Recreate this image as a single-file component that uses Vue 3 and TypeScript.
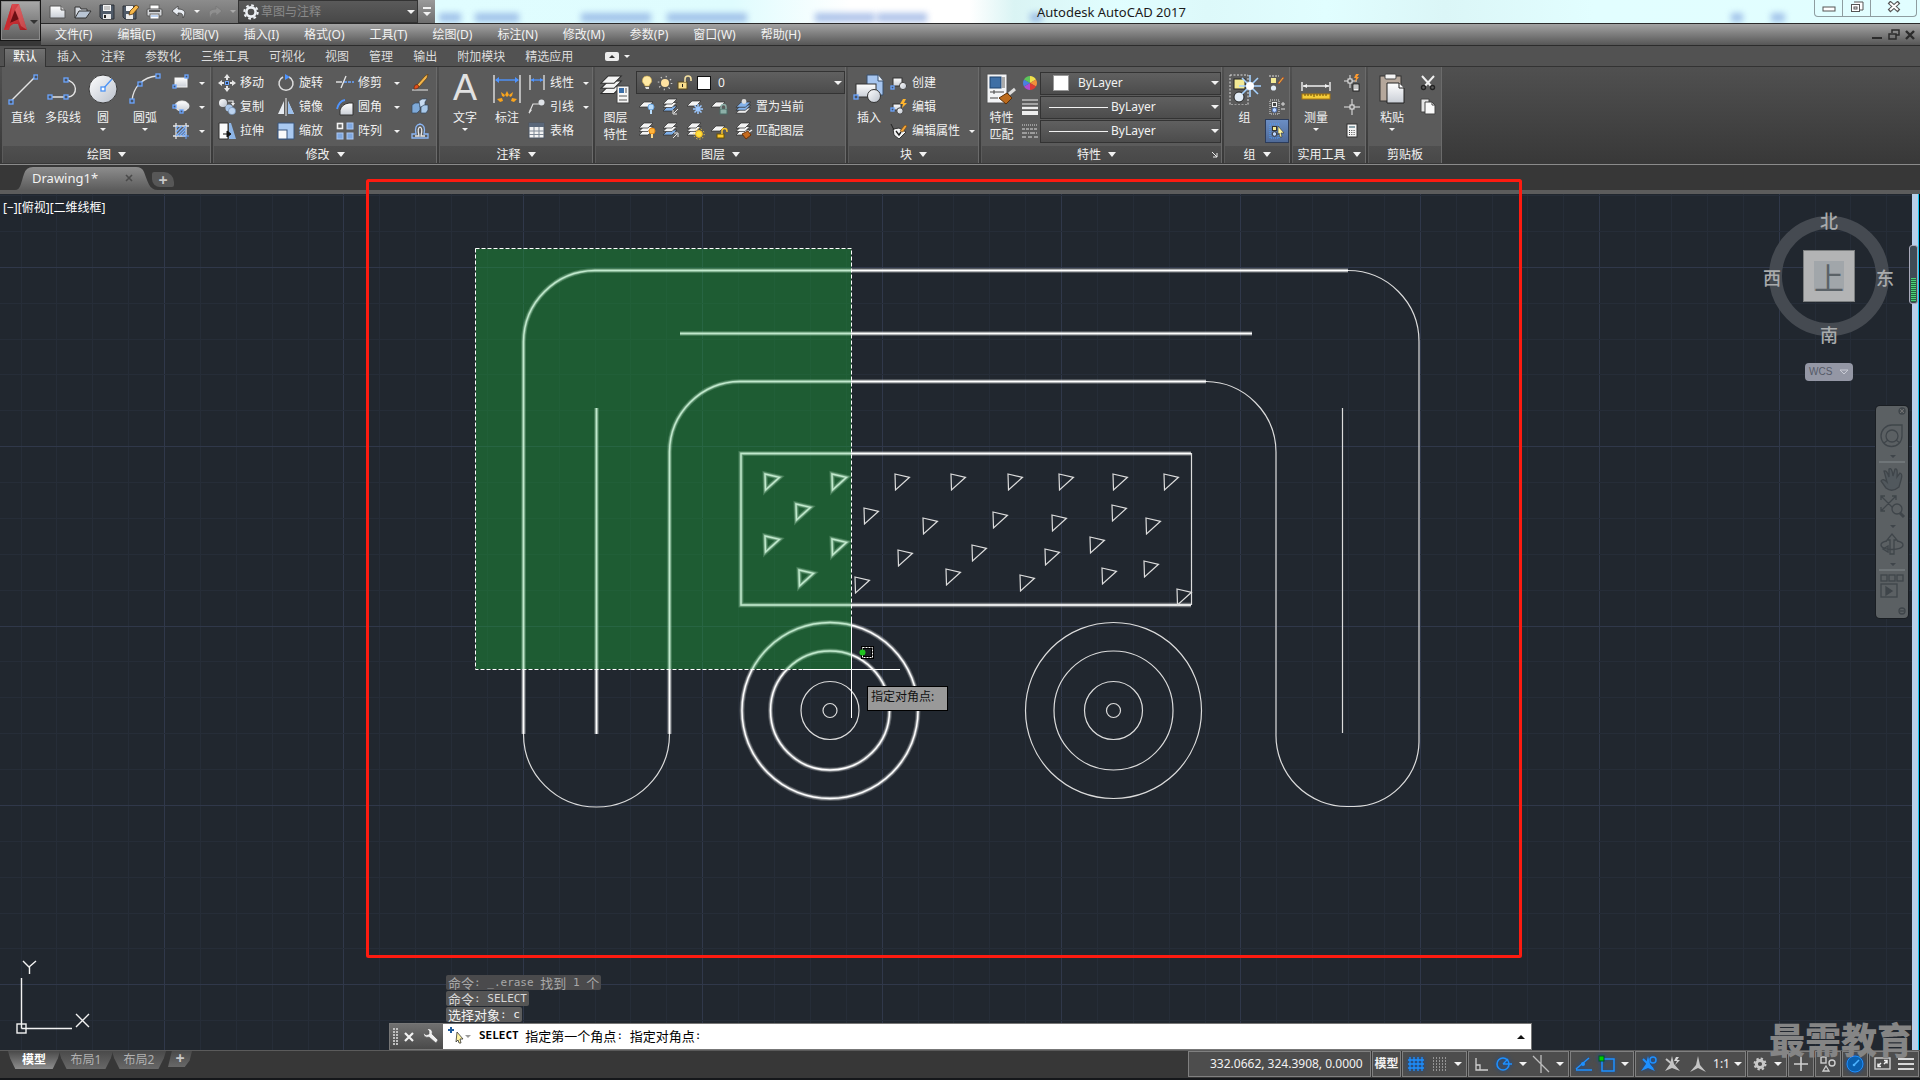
<script setup lang="ts">
import { ref } from 'vue'

interface Icon { w: number; h: number; body: string }
interface Tool { icon: string; label?: string; arrow?: boolean; active?: boolean; name: string }

const sq = (x: number, y: number, s = 4) =>
  `<rect x="${x}" y="${y}" width="${s}" height="${s}" fill="#4a5462" stroke="#6aa5ff" stroke-width="1.3"/>`
const sheet = (x: number, y: number, fill = '#f4f4f4', s = 1) =>
  `<path transform="translate(${x} ${y}) scale(${s})" d="M5 0h9l-5 5H0z" fill="${fill}" stroke="#2c2c2c" stroke-width=".7"/>`
const stack = (x: number, y: number, last = '#f4f4f4', s = 1) =>
  sheet(x, y + 7 * s, last, s) + sheet(x, y + 3.5 * s, '#f4f4f4', s) + sheet(x, y, '#f4f4f4', s)

const icons: Record<string, Icon> = {
  // quick access
  new: { w: 18, h: 16, body: '<path d="M1 2h11l4 4v8H1z" fill="url(#paper)" stroke="#555"/><path d="M12 2v4h4" fill="#ccc" stroke="#555"/>' },
  open: { w: 18, h: 16, body: '<path d="M1 14V3h5l1 2h6v3" fill="#d6dbe2" stroke="#333"/><path d="M1 14L5 7h12l-5 7z" fill="#b9c5d4" stroke="#333"/>' },
  save: { w: 16, h: 16, body: '<path d="M1 1h14v14H3l-2-2z" fill="#505b69" stroke="#2c3037"/><rect x="4" y="1" width="8" height="6" fill="#f6f6f6"/><path d="M5 3h6M5 5h6" stroke="#999"/><rect x="4" y="10" width="8" height="5" fill="#e8e8e8"/><rect x="5" y="11" width="2" height="3" fill="#222"/>' },
  saveas: { w: 17, h: 16, body: '<path d="M1 2h13v13H3l-2-2z" fill="#505b69" stroke="#2c3037"/><rect x="4" y="2" width="7" height="5" fill="#f6f6f6"/><rect x="4" y="10" width="7" height="5" fill="#e8e8e8"/><path d="M7 11l1-4 6-6 3 2-6 7z" fill="#f7b748" stroke="#5a3a10" stroke-width=".8"/>' },
  print: { w: 18, h: 16, body: '<rect x="4" y="1" width="9" height="6" fill="#fff" stroke="#666"/><rect x="1" y="5" width="15" height="7" rx="1" fill="#d5d7da" stroke="#555"/><path d="M3 7h11" stroke="#555" stroke-width="2"/><rect x="4" y="10" width="9" height="5" fill="#fff" stroke="#666"/><path d="M5 12h7" stroke="#7ca5df"/>' },
  undo: { w: 16, h: 14, body: '<path d="M7 1L1 6l6 5V8c4 0 5 1 5 5 4-6 1-9-5-9z" fill="#e8ecf2" stroke="#444" stroke-width=".8"/>' },
  redo: { w: 16, h: 14, body: '<path d="M9 1l6 5-6 5V8c-4 0-5 1-5 5C0 7 3 4 9 4z" fill="#8f8f8f" stroke="#777" stroke-width=".8"/>' },
  gear: { w: 16, h: 16, body: '<circle cx="8" cy="8" r="4.6" fill="none" stroke="#eef1f5" stroke-width="2.6"/><circle cx="8" cy="8" r="6.7" fill="none" stroke="#eef1f5" stroke-width="2" stroke-dasharray="2.7 2.56"/>' },
  // draw
  line: { w: 30, h: 32, body: `<path d="M3 28L27 4" stroke="#e4e4e4" stroke-width="1.4"/>${sq(1, 27)}${sq(26, 2)}` },
  pline: { w: 32, h: 32, body: `<path d="M2 24h18c12 0 11-17-2-17" fill="none" stroke="#e4e4e4" stroke-width="1.4"/>${sq(1, 22)}${sq(17, 22)}${sq(17, 5)}` },
  circle: { w: 32, h: 32, body: `<circle cx="16" cy="16" r="14" fill="url(#disc)" stroke="#3c3c3c"/><path d="M16 16l9-10" stroke="#4b92f5" stroke-width="1.3"/><rect x="14" y="14" width="4" height="4" fill="#fff" stroke="#4b92f5" stroke-width="1.3"/>` },
  arc: { w: 32, h: 32, body: `<path d="M3 28C4 14 14 4 28 3" fill="none" stroke="#e4e4e4" stroke-width="1.4"/>${sq(1, 26)}${sq(9, 9)}${sq(27, 1)}` },
  rect: { w: 18, h: 16, body: `<rect x="3" y="4" width="12" height="9" fill="url(#paper)" stroke="#f6f6f6"/>${sq(13, 1, 3)}${sq(1, 11, 3)}` },
  ellipse: { w: 18, h: 16, body: `<ellipse cx="10" cy="8" rx="7" ry="5" fill="url(#paper)" stroke="#f0f0f0"/>${sq(1, 7, 3)}${sq(8, 12, 3)}` },
  hatch: { w: 18, h: 18, body: '<path d="M1 4h16M1 14h13M4 1v16M14 1v13" stroke="#e8e8e8" stroke-width="1.3"/><path d="M4 14L14 4M4 10l6-6M4 6l2-2M7 14l7-7M10 14l4-4" stroke="#7ab0ff" stroke-width="1.5"/><path d="M14 12v5M11 14h6" stroke="#6aa5ff"/>' },
  // modify
  move: { w: 18, h: 18, body: '<path d="M9 0l3 4H6zM9 18l3-4H6zM0 9l4-3v6zM18 9l-4-3v6z" fill="#e6e6e6"/><path d="M9 3v3M9 12v3M3 9h3M12 9h3" stroke="#e6e6e6" stroke-width="2"/><rect x="7.5" y="7.5" width="3" height="3" fill="#2c3e58" stroke="#6aa5ff"/>' },
  rotate: { w: 18, h: 18, body: '<path d="M6 3a7 7 0 1 0 6 0" fill="none" stroke="#dedede" stroke-width="1.5"/><path d="M8 0l5 3-5 3z" fill="#4e94ff"/>' },
  trim: { w: 18, h: 16, body: '<path d="M0 8h6" stroke="#e8e8e8" stroke-width="1.4"/><path d="M8 8h10" stroke="#6aa5ff" stroke-width="1.4" stroke-dasharray="3 1"/><path d="M5 14l5-12" stroke="#e8e8e8" stroke-width="1.3"/>' },
  brush: { w: 18, h: 18, body: '<path d="M1 16h16" stroke="#e8e8e8"/><path d="M6 11l8-9 3-2-1 4-8 9z" fill="#f3b54a" stroke="#5c3b10" stroke-width=".7"/><path d="M3 15c0-4 2-5 4-4 2 2 0 4-4 4z" fill="#e0501a" stroke="#5c1a05" stroke-width=".6"/>' },
  copy: { w: 18, h: 18, body: '<circle cx="5" cy="5" r="4" fill="url(#disc)"/><circle cx="11" cy="10" r="3.6" fill="#a9c5e8"/><circle cx="14" cy="13" r="3.6" fill="#bcd3ef" stroke="#6d8bb0" stroke-width=".6"/><path d="M10 3h5v3" fill="none" stroke="#f0f0f0" stroke-width="1.2"/><path d="M13 5h4l-2 3z" fill="#f0f0f0"/>' },
  mirror: { w: 18, h: 18, body: '<path d="M7 3v13H1zM11 3v13h6z" fill="#e7ebf0"/><path d="M11 3v13h6z" fill="#9cc0ec"/><path d="M9 0v18" stroke="#eee"/>' },
  fillet: { w: 18, h: 18, body: '<path d="M4 17V12q2-6 9-7h4v12z" fill="url(#paper)" stroke="#333"/><path d="M1 11Q3 3 9 2" fill="none" stroke="#4e94ff" stroke-width="1.8"/>' },
  explode: { w: 18, h: 16, body: '<path d="M1 7l3-2h5v7l-3 3H1z" fill="#7ea9d8" stroke="#34485f" stroke-width=".7"/><path d="M8 3l3-2h5l-2 3v5H9z" fill="#c8dcf2" stroke="#34485f" stroke-width=".7"/><path d="M10 9l3-2h4v5l-2 3h-5z" fill="#a9c9ea" stroke="#34485f" stroke-width=".7"/>' },
  stretch: { w: 18, h: 18, body: '<path d="M1 1h9v16H1z" fill="#fafafa" stroke="#333"/><path d="M11 1l2 0 5 16h-7z" fill="#8db5e6"/><path d="M5 12h6M9 9l4 3-4 3z" stroke="#111" fill="#111"/>' },
  scale: { w: 18, h: 18, body: '<path d="M1 1h16v16H1z" fill="#aac9f0" stroke="#39547a"/><rect x="1" y="8" width="9" height="9" fill="#fafafa" stroke="#39547a"/>' },
  array: { w: 18, h: 18, body: '<rect x="1.500" y="1.500" width="5" height="5" fill="#666" stroke="#f4f4f4" stroke-width="1.6"/><g fill="#7fa7df" stroke="#aac8f5"><rect x="11" y="1" width="6" height="6"/><rect x="1" y="11" width="6" height="6"/><rect x="11" y="11" width="6" height="6"/></g>' },
  offset: { w: 18, h: 18, body: '<path d="M1 16v-4h4q-2-9 4-10 6 1 4 10h4v4z" fill="none" stroke="#8ab6f5" stroke-width="1.3"/><path d="M4 14h4q-2-8 1-9 3 1 1 9h4" fill="none" stroke="#e8e8e8" stroke-width="1.3"/>' },
  // annotation
  dim: { w: 30, h: 32, body: '<path d="M2 2v28M28 2v28" stroke="#e0e0e0" stroke-width="1.4"/><path d="M4 7h22" stroke="#4e94ff" stroke-width="1.4"/><path d="M3 7l4-3v6zM27 7l-4-3v6z" fill="#4e94ff"/><g fill="#f9a41d"><path d="M15 18l2 4-2 2-2-2z"/><path d="M9 19l4 3-1 2-2-1z"/><path d="M21 19l-4 3 1 2 2-1z"/><path d="M5 26l5-1 1 3-3 1z"/><path d="M25 26l-5-1-1 3 3 1z"/></g>' },
  linear: { w: 18, h: 16, body: '<path d="M2 1v15M16 1v15" stroke="#e0e0e0" stroke-width="1.3"/><path d="M3 6h12" stroke="#4e94ff" stroke-width="1.3"/><path d="M3 6l3-2v4zM15 6l-3-2v4z" fill="#4e94ff"/>' },
  leader: { w: 18, h: 16, body: '<path d="M1 15L5 6h6" fill="none" stroke="#e0e0e0" stroke-width="1.2"/><path d="M1 16l1-5 2 1z" fill="#e0e0e0"/><circle cx="13.500" cy="4.500" r="3" fill="#dfe3e8"/>' },
  table: { w: 18, h: 18, body: '<rect x="1" y="1" width="15" height="15" fill="#f2f2f2" stroke="#4c5665"/><rect x="1" y="1" width="15" height="4" fill="#5a6779"/><path d="M1 9h15M1 12.500h15M6 5v11M11 5v11" stroke="#7d8794"/>' },
  // layers
  layers: { w: 32, h: 32, body: stack(1, 3, '#f4f4f4', 1.45) + '<rect x="17" y="13" width="12" height="17" fill="#f7f7f7" stroke="#444"/><rect x="19" y="15" width="5" height="5" fill="#3a6ea8"/><path d="M26 15v5M19 23h8M19 27h8" stroke="#555"/>' },
  lay1: { w: 18, h: 18, body: sheet(0, 4) + '<circle cx="12" cy="9" r="3" fill="#b9dcfb" stroke="#6aa5e0"/><path d="M12 12v4" stroke="#b9dcfb" stroke-width="2"/>' },
  lay2: { w: 18, h: 18, body: stack(0, 1, '#7fb0ea') + '<path d="M15 11l-4 4M10 12v4h4" stroke="#e8e8e8" fill="none"/>' },
  lay3: { w: 18, h: 18, body: sheet(0, 3) + '<path d="M11 6v10M6 11h10M7.500 7.500l7 7M14.500 7.500l-7 7" stroke="#9cc8ff" stroke-width="1.5"/>' },
  lay4: { w: 18, h: 18, body: sheet(0, 4) + '<rect x="9" y="11" width="7" height="5" fill="#8db0a8" stroke="#4b6d66"/><path d="M10 11V9a2.500 2.500 0 0 1 5 0v2" fill="none" stroke="#8db0a8" stroke-width="1.4"/>' },
  lay5: { w: 18, h: 18, body: sheet(1, 10, '#eee', 1.05) + sheet(1, 7, '#84b2ea', 1.05) + sheet(1, 4, '#84b2ea', 1.05) + '<circle cx="9" cy="3.500" r="2.400" fill="#ddd"/>' },
  lay6: { w: 18, h: 18, body: stack(0, 1) + '<circle cx="13" cy="9" r="3" fill="#ffb43c" stroke="#e88a10"/><path d="M13 12v4" stroke="#ffd98a" stroke-width="2"/>' },
  lay7: { w: 18, h: 18, body: stack(0, 1, '#7fb0ea') + '<path d="M10 16l4-4M11 11h4v4" stroke="#e8e8e8" fill="none"/>' },
  lay8: { w: 18, h: 18, body: stack(0, 1) + '<circle cx="12" cy="12" r="3.400" fill="#ffe23c" stroke="#f0b020"/><circle cx="12" cy="12" r="5.200" fill="none" stroke="#ffd63c" stroke-dasharray="1.200 2"/>' },
  lay9: { w: 18, h: 18, body: sheet(0, 4) + '<rect x="6" y="12" width="7" height="4" fill="#ffc92c" stroke="#6b5200"/><path d="M11 12V9a2.500 2.500 0 0 1 5 0v1" fill="none" stroke="#ffc92c" stroke-width="1.400"/>' },
  lay10: { w: 18, h: 18, body: stack(1, 1) + '<path d="M7 12l6-3 3 4-5 4z" fill="#c46a1e" stroke="#6b3207"/><path d="M14 10l3-2" stroke="#eee" stroke-width="1.500"/>' },
  bulb: { w: 12, h: 16, body: '<path d="M6 1a4.500 4.500 0 0 1 3 8l-1 2H4L3 9a4.500 4.500 0 0 1 3-8z" fill="#ffe9a3" stroke="#c9a64a" stroke-width=".6"/><path d="M4 12h4v2H5z" fill="#ddd"/>' },
  sun: { w: 16, h: 16, body: '<circle cx="8" cy="8" r="4" fill="#ffe2a1"/><circle cx="8" cy="8" r="6.500" fill="none" stroke="#d8d8d8" stroke-width="1.600" stroke-dasharray="1 4.100"/>' },
  lock: { w: 16, h: 16, body: '<rect x="1" y="7" width="9" height="7" fill="#f8dd8c" stroke="#5a4a1c"/><path d="M8 7V4a3 3 0 0 1 6 0v2" fill="none" stroke="#f3dfa0" stroke-width="1.600"/><path d="M5.500 9v3" stroke="#222"/>' },
  // block
  insert: { w: 32, h: 32, body: `<path d="M14 2h11l5 6v14H14z" fill="#a6c5ef" stroke="#38506f"/><path d="M25 2v6h5" fill="#e9f0fa" stroke="#38506f"/><rect x="3" y="11" width="20" height="13" fill="url(#paper)" stroke="#333"/><circle cx="21" cy="23" r="6.500" fill="url(#disc)" stroke="#333"/>${sq(1, 22)}` },
  create: { w: 18, h: 16, body: `<rect x="3" y="3" width="9" height="8" fill="url(#paper)" stroke="#333"/><circle cx="13" cy="11" r="3.600" fill="url(#disc)" stroke="#444"/>${sq(1, 11, 3)}` },
  edit: { w: 18, h: 16, body: `<rect x="3" y="5" width="8" height="6" fill="url(#paper)" stroke="#333"/><circle cx="10" cy="12" r="3.200" fill="url(#disc)" stroke="#444"/>${sq(1, 9, 3)}<path d="M13 0l-3 5h3l-1 4 5-5h-3l2-4z" fill="#ffb52e"/>` },
  attr: { w: 18, h: 16, body: '<path d="M3 6l6-1 7 4-7 7-5-4z" fill="#f4f4f4" stroke="#333"/><path d="M1 1l3 6" stroke="#222"/><path d="M6 8l3 4 2-3" stroke="#222" fill="none" stroke-width="1.400"/><path d="M10 8l5-6 2 1-4 6z" fill="#f3a53a" stroke="#744508" stroke-width=".6"/>' },
  // properties
  match: { w: 32, h: 32, body: '<rect x="1" y="1" width="20" height="29" fill="#f3f4f6" stroke="#555"/><rect x="4" y="4" width="11" height="11" fill="#3f6fa5" stroke="#20456f"/><rect x="16" y="4" width="3" height="11" fill="#aaa"/><path d="M4 19h14M4 25h8M8 17v4" stroke="#444"/><path d="M13 25l8-5 5 5-6 6z" fill="#bb6a1c" stroke="#5f3007"/><path d="M23 21l6-5" stroke="#ddd" stroke-width="3"/>' },
  wheel: { w: 16, h: 16, body: '<g transform="translate(8 8)"><path d="M0 0V-7A7 7 0 0 1 6-3.500z" fill="#f0e04a"/><path d="M0 0L6-3.500A7 7 0 0 1 6 3.500z" fill="#f2903a"/><path d="M0 0L6 3.500A7 7 0 0 1 0 7z" fill="#dc3b35"/><path d="M0 0V7A7 7 0 0 1-6 3.500z" fill="#b04bd0"/><path d="M0 0L-6 3.500A7 7 0 0 1-6-3.500z" fill="#4a7fe0"/><path d="M0 0L-6-3.500A7 7 0 0 1 0-7z" fill="#5cc45a"/></g>' },
  weight: { w: 16, h: 16, body: '<path d="M0 1h16M0 5h16" stroke="#eee"/><path d="M0 9h16" stroke="#eee" stroke-width="2.400"/><path d="M0 14h16" stroke="#eee" stroke-width="4"/>' },
  ltype: { w: 16, h: 16, body: '<path d="M0 2h16" stroke="#ddd" stroke-dasharray="1 1"/><path d="M0 6h16" stroke="#ddd" stroke-dasharray="3 1"/><path d="M0 10h16" stroke="#ddd" stroke-dasharray="5 1 1 1"/><path d="M0 14h16" stroke="#ddd" stroke-dasharray="4 2"/>' },
  // groups
  group: { w: 34, h: 34, body: '<path d="M2 2h18v30H2z" fill="none" stroke="#ddd" stroke-dasharray="2 1.500"/><rect x="6" y="6" width="11" height="10" fill="#f3ea95" stroke="#222"/><circle cx="11" cy="24" r="5" fill="#e2ecf6" stroke="#222"/><path d="M22 2v22M11 13h22M14 5l16 16M30 5L14 21" stroke="#a6d2ff" stroke-width="1.600"/><circle cx="22" cy="13" r="4" fill="#fff"/>' },
  gedit: { w: 18, h: 18, body: '<path d="M1 2h10" stroke="#ddd" stroke-dasharray="2 1"/><rect x="3" y="4" width="5" height="5" fill="#f3ea95"/><circle cx="5.500" cy="14" r="2.600" fill="#e2ecf6"/><path d="M10 9l5-6 1 1-5 6z" fill="#f3c04a" stroke="#b03a1a" stroke-width=".6"/>' },
  gadd: { w: 18, h: 18, body: '<path d="M2 2h9v14H2z" fill="none" stroke="#ddd" stroke-dasharray="1 1"/><rect x="4.500" y="4.500" width="4" height="4" fill="#444" stroke="#eee"/><circle cx="6.500" cy="12" r="2.300" fill="#bcd6ff" stroke="#4e6fb0"/><path d="M13 6h4M15 4v4M13 11h4" stroke="#ddd"/>' },
  gsel: { w: 18, h: 18, body: '<path d="M2 2h9v14H2z" fill="none" stroke="#4fa0ff" stroke-dasharray="1 1"/><rect x="4.500" y="4.500" width="4" height="4" fill="#f3ea95" stroke="#333"/><circle cx="6.500" cy="12" r="2.300" fill="#bcd6ff" stroke="#333"/><path d="M10 4l6 7-3 0 1 4-2 0-1-4-1 2z" fill="#fff59d" stroke="#333" stroke-width=".6"/>' },
  // utilities
  measure: { w: 32, h: 32, body: '<path d="M2 9v9M30 9v9M3 13h26" stroke="#f0f0f0" stroke-width="1.400"/><path d="M3 13l4-2v4zM29 13l-4-2v4z" fill="#f0f0f0"/><rect x="2" y="21" width="28" height="5" fill="#f4cb39" stroke="#a87612"/><path d="M5 21v2M8 21v2M11 21v2M14 21v3M17 21v2M20 21v2M23 21v2M26 21v2" stroke="#6b4b06"/>' },
  quick: { w: 18, h: 18, body: '<path d="M7 1v13M1 7h13" stroke="#e8e8e8"/><rect x="5" y="5" width="4" height="4" fill="#555" stroke="#eee"/><rect x="10" y="10" width="6" height="7" fill="#f4f4f4" stroke="#222"/><path d="M11.500 12h3M11.500 14h3" stroke="#333" stroke-dasharray="1 1"/><path d="M13 0l-2 4h2l-1 4 4-5h-2l2-3z" fill="#ff9a2e"/>' },
  point: { w: 18, h: 18, body: '<path d="M9 1v16M1 9h16" stroke="#e8e8e8"/><rect x="7" y="7" width="4" height="4" fill="#666" stroke="#eee"/>' },
  calc: { w: 18, h: 18, body: '<rect x="4" y="2" width="10" height="13" fill="#f4f4f4" stroke="#333"/><rect x="6" y="4" width="6" height="2" fill="#8aa0a8"/><path d="M6 8.500h6M6 10.500h6M6 12.500h6" stroke="#444" stroke-dasharray="1 1.300"/>' },
  paste: { w: 32, h: 32, body: '<rect x="4" y="3" width="21" height="25" fill="#b5a79b" stroke="#333"/><rect x="9" y="1" width="11" height="5" rx="1" fill="#f4f4f4" stroke="#444"/><path d="M11 10h12l5 5v15H11z" fill="url(#paper)" stroke="#222"/><path d="M23 10v5h5" fill="#fff" stroke="#222"/>' },
  cut: { w: 18, h: 18, body: '<path d="M3 2l9 10M15 2L6 12" stroke="#f0f0f0" stroke-width="2"/><circle cx="4.500" cy="13.500" r="2" fill="none" stroke="#222" stroke-width="1.400"/><circle cx="13.500" cy="13.500" r="2" fill="none" stroke="#222" stroke-width="1.400"/>' },
  copyclip: { w: 18, h: 18, body: '<path d="M2 1h8v13H2z" fill="#e4e4e4" stroke="#444"/><path d="M6 4h7l3 3v9H6z" fill="#fafafa" stroke="#444"/><path d="M13 4v3h3" fill="none" stroke="#444"/>' },
  // status bar
  sgrid: { w: 18, h: 18, body: '<path d="M3 2v14M7 2v14M11 2v14M15 2v14M1 5h16M1 9h16M1 13h16" stroke="#1e90ff" stroke-width="1.300"/>' },
  ssnap: { w: 16, h: 16, body: '<path d="M1 2h14M1 5h14M1 8h14M1 11h14M1 14h14" stroke="#ddd" stroke-dasharray="1 2"/>' },
  sortho: { w: 16, h: 16, body: '<path d="M3 2v12h12M3 9h4v5" fill="none" stroke="#cfcfcf" stroke-width="1.300"/>' },
  spolar: { w: 18, h: 18, body: '<circle cx="8" cy="9" r="6" fill="none" stroke="#1e90ff" stroke-width="1.600"/><path d="M8 9h9M8 9l5-5" stroke="#1e90ff" stroke-width="1.400"/>' },
  siso: { w: 18, h: 20, body: '<path d="M9 1v18M1 2l16 16" stroke="#bdbdbd" stroke-width="1.300"/>' },
  strack: { w: 18, h: 18, body: '<path d="M1 15h16M1 14L14 3" stroke="#1e90ff" stroke-width="1.500"/><circle cx="8" cy="9" r="2" fill="#1e90ff"/>' },
  sosnap: { w: 18, h: 18, body: '<rect x="4" y="4" width="12" height="12" fill="none" stroke="#1e90ff" stroke-width="1.500"/><rect x="1" y="1" width="5" height="5" fill="#00d000" stroke="#052"/>' },
  sann1: { w: 18, h: 18, body: '<path d="M8 1l2 8 5 7-7-3-7 3 5-7z" fill="#1e90ff"/><circle cx="13" cy="5" r="3" fill="none" stroke="#1e90ff" stroke-width="1.500"/><path d="M3 4l10 10" stroke="#1e90ff" stroke-width="2"/>' },
  sann2: { w: 18, h: 18, body: '<path d="M8 1l2 8 6 7-8-3-7 3 5-7z" fill="#c4c4c4"/><path d="M12 2l-2 4h3l-2 4 5-5h-3l2-3z" fill="#d4d4d4"/><path d="M2 4l6 5" stroke="#c4c4c4" stroke-width="2"/>' },
  sann3: { w: 18, h: 18, body: '<path d="M9 1l2 9 6 7-8-4-8 4 6-7z" fill="#c4c4c4"/>' },
  sgear: { w: 16, h: 16, body: '<circle cx="8" cy="8" r="3.600" fill="none" stroke="#c8c8c8" stroke-width="3"/><circle cx="8" cy="8" r="5.500" fill="none" stroke="#c8c8c8" stroke-width="2" stroke-dasharray="2.300 2.020"/>' },
  splus: { w: 16, h: 16, body: '<path d="M8 1v14M1 8h14" stroke="#cfcfcf" stroke-width="1.600"/>' },
  siso2: { w: 18, h: 18, body: '<rect x="2" y="2" width="5" height="6" fill="none" stroke="#cfcfcf" stroke-width="1.400"/><circle cx="13" cy="8" r="3" fill="none" stroke="#cfcfcf" stroke-width="1.400"/><path d="M7 11l3 5H4z" fill="none" stroke="#cfcfcf" stroke-width="1.300"/>' },
  shw: { w: 18, h: 18, body: '<circle cx="9" cy="9" r="8" fill="#0a5fae" stroke="#1e90ff"/><path d="M8 10l5-5" stroke="#4db3ff" stroke-width="1.600"/><circle cx="8" cy="10" r="1.300" fill="#4db3ff"/>' },
  sfull: { w: 18, h: 16, body: '<rect x="1" y="2" width="15" height="11" fill="none" stroke="#cfcfcf" stroke-width="1.400"/><path d="M4 10l3-3M4 7.500v3h3M13 5l-3 3M13 7.500v-3h-3" fill="none" stroke="#eee" stroke-width="1.500"/>' },
  smenu: { w: 16, h: 16, body: '<path d="M0 3h16M0 8h16M0 13h16" stroke="#d8d8d8" stroke-width="2"/>' },
  wrench: { w: 16, h: 16, body: '<path d="M1 4l2 2 3-1 0-3-2-2c4-1 6 2 5 5l6 6-2 3-7-6C3 9 0 7 1 4z" fill="#f0f0f0" stroke="#555" stroke-width=".6"/>' },
  prompt: { w: 18, h: 18, body: '<path d="M4 1v6M1 4h6" stroke="#1f5b9c" stroke-width="2"/><path d="M10 6l6 7-3 0 1 4-2 0-1-3-2 2z" fill="#fff3a0" stroke="#333" stroke-width=".8"/>' },
}

const menus = ['文件(F)', '编辑(E)', '视图(V)', '插入(I)', '格式(O)', '工具(T)', '绘图(D)', '标注(N)', '修改(M)', '参数(P)', '窗口(W)', '帮助(H)']
const tabs = ['默认', '插入', '注释', '参数化', '三维工具', '可视化', '视图', '管理', '输出', '附加模块', '精选应用']
const activeTab = ref('默认')
const quick = [['new', '新建'], ['open', '打开'], ['save', '保存'], ['saveas', '另存为'], ['print', '打印'], ['undo', '放弃'], ['redo', '重做']]

const drawBig: Tool[] = [
  { icon: 'line', label: '直线', name: '直线' },
  { icon: 'pline', label: '多段线', name: '多段线' },
  { icon: 'circle', label: '圆', arrow: true, name: '圆' },
  { icon: 'arc', label: '圆弧', arrow: true, name: '圆弧' },
]
const drawSmall: Tool[] = [
  { icon: 'rect', arrow: true, name: '矩形' },
  { icon: 'ellipse', arrow: true, name: '椭圆' },
  { icon: 'hatch', arrow: true, name: '图案填充' },
]
const modify: Tool[] = [
  { icon: 'move', label: '移动', name: '移动' }, { icon: 'rotate', label: '旋转', name: '旋转' },
  { icon: 'trim', label: '修剪', arrow: true, name: '修剪' }, { icon: 'brush', name: '删除' },
  { icon: 'copy', label: '复制', name: '复制' }, { icon: 'mirror', label: '镜像', name: '镜像' },
  { icon: 'fillet', label: '圆角', arrow: true, name: '圆角' }, { icon: 'explode', name: '分解' },
  { icon: 'stretch', label: '拉伸', name: '拉伸' }, { icon: 'scale', label: '缩放', name: '缩放' },
  { icon: 'array', label: '阵列', arrow: true, name: '阵列' }, { icon: 'offset', name: '偏移' },
]
const annotate: Tool[] = [
  { icon: 'linear', label: '线性', arrow: true, name: '线性' },
  { icon: 'leader', label: '引线', arrow: true, name: '引线' },
  { icon: 'table', label: '表格', name: '表格' },
]
const layerTools: Tool[] = [
  { icon: 'lay1', name: '关' }, { icon: 'lay2', name: '隔离' }, { icon: 'lay3', name: '冻结' },
  { icon: 'lay4', name: '锁定' }, { icon: 'lay5', label: '置为当前', name: '置为当前' },
  { icon: 'lay6', name: '打开所有图层' }, { icon: 'lay7', name: '取消隔离' }, { icon: 'lay8', name: '解冻所有图层' },
  { icon: 'lay9', name: '解锁' }, { icon: 'lay10', label: '匹配图层', name: '匹配图层' },
]
const block: Tool[] = [
  { icon: 'create', label: '创建', name: '创建' },
  { icon: 'edit', label: '编辑', name: '编辑' },
  { icon: 'attr', label: '编辑属性', arrow: true, name: '编辑属性' },
]
const groupTools: Tool[] = [{ icon: 'gedit', name: '组编辑' }, { icon: 'gadd', name: '解除编组' }, { icon: 'gsel', active: true, name: '启用组选择' }]
const utilTools: Tool[] = [{ icon: 'quick', name: '快速选择' }, { icon: 'point', name: '点坐标' }, { icon: 'calc', name: '计算器' }]
const clipTools: Tool[] = [{ icon: 'cut', name: '剪切' }, { icon: 'copyclip', name: '复制剪裁' }]

const GRID = 35.88
const gridX = Array.from({ length: 54 }, (_, i) => ({ at: 21 + i * GRID, major: (i + 1) % 5 === 0 }))
const gridY = Array.from({ length: 25 }, (_, i) => ({ at: 195.500 + i * GRID, major: (i + 3) % 5 === 0 }))

const tri = ([x, y]: number[]) => `M${x} ${y}l14.500 3.300l-14 12.700z`
const plain = [
  [895, 474], [951, 474], [1008, 474], [1059, 474], [1113, 474], [1164, 474], [864, 508], [923, 518], [993, 512],
  [1052, 515], [1112, 505], [1146, 518], [898, 550], [972, 545], [1045, 549], [1090, 537], [946, 569], [1020, 575],
  [1102, 568], [1144, 561], [855, 577], [1177, 589],
].map(tri).join('')
const picked = [[765, 474], [832, 474], [796, 504], [765, 536], [832, 539], [799, 570]].map(tri).join('')
const pickedPath =
  'M523.500 734V342A72 72 0 0 1 595 270.500H1348M680 333.500H1252M669.500 734V452A71 71 0 0 1 740 381.500H1206' +
  'M596.500 408V734M1191 453.500H741V605H1191' + picked
const plainPath =
  'M523.500 734A73 73 0 0 0 669.500 734M1348 270.500A71 71 0 0 1 1419 342V742A66 66 0 0 1 1354 806.500H1348' +
  'A71 71 0 0 1 1276 734V452A71 71 0 0 0 1206 381.500M1342.500 408V733M1191.500 453V605' + plain

const history = ['命令: _.erase 找到 1 个', '命令: SELECT', '选择对象: c']
const split = (s: string) => s.split(/([\u4e00-\u9fff]+)/).filter(Boolean).map(t => ({ t, cjk: /[\u4e00-\u9fff]/.test(t) }))
const promptText = '指定第一个角点: 指定对角点:'
const command = ref('')
</script>

<template>
  <div class="app">
    <svg class="defs" width="0" height="0" aria-hidden="true">
      <defs>
        <linearGradient id="paper" x1="0" y1="0" x2="0" y2="1"><stop offset="0" stop-color="#fff" /><stop offset="1" stop-color="#c9ced6" /></linearGradient>
        <linearGradient id="disc" x1="0" y1="0" x2="1" y2="1"><stop offset="0" stop-color="#fff" /><stop offset="1" stop-color="#b9c0cb" /></linearGradient>
        <linearGradient id="tab" x1="0" y1="0" x2="0" y2="1"><stop offset="0" stop-color="#8d8d8d" /><stop offset="1" stop-color="#5c5c5c" /></linearGradient>
        <linearGradient id="logo" x1="0" y1="0" x2="1" y2="1"><stop offset="0" stop-color="#e8585c" /><stop offset="1" stop-color="#a3161c" /></linearGradient>
      </defs>
    </svg>

    <header class="top">
      <button class="appbtn" aria-label="应用程序菜单">
        <svg width="24" height="28" viewBox="0 0 24 28">
          <path d="M8 1h7l8 26h-7l-2-6-7 0-2 6H0z" fill="url(#logo)" />
          <path d="M11 7l4 9-9 4z" fill="#6d0f13" /><path d="M8 1L0 27l14-9-8 2z" fill="#c72b30" /><path d="M15 1l8 26-6-4-6-16z" fill="#f08b8d" opacity=".4" />
        </svg>
        <i class="down dark"></i>
      </button>
      <div class="titlebar">
        <div class="quick">
          <template v-for="q in quick" :key="q[0]">
            <button class="bare" :aria-label="q[1]"><svg :width="icons[q[0]].w" :height="icons[q[0]].h" v-html="icons[q[0]].body"></svg></button>
            <i v-if="q[0] === 'undo' || q[0] === 'redo'" class="down" :class="{ faint: q[0] === 'redo' }"></i>
          </template>
        </div>
        <div class="combo space">
          <svg width="16" height="16" v-html="icons.gear.body"></svg>
          <select aria-label="工作空间"><option>草图与注释</option></select>
          <i class="down wide"></i>
        </div>
        <button class="bare more" aria-label="自定义快速访问工具栏"><i class="dash"></i><i class="down wide"></i></button>
        <div class="glass">
          <i v-for="n in 9" :key="n" class="smudge" :class="'s' + n"></i>
          <h1>Autodesk AutoCAD 2017</h1>
          <div class="winctl">
            <button aria-label="最小化"><svg width="14" height="12"><rect x="1" y="6" width="12" height="4" fill="#fff" stroke="#555" /></svg></button>
            <button aria-label="还原"><svg width="14" height="12"><path d="M4 1h9v8h-3" fill="#fff" stroke="#555" /><rect x="1.500" y="3.500" width="8" height="7" fill="#fff" stroke="#555" /><rect x="4" y="6" width="3" height="2" fill="none" stroke="#555" /></svg></button>
            <button class="close" aria-label="关闭"><svg width="14" height="12"><path d="M2 1l10 9M12 1L2 10" stroke="#555" stroke-width="4" /><path d="M3 2l8 7M11 2L3 9" stroke="#fff" stroke-width="2" /></svg></button>
          </div>
        </div>
      </div>
      <nav class="menubar">
        <button v-for="m in menus" :key="m" class="bare">{{ m }}</button>
        <div class="docctl">
          <button class="bare" aria-label="最小化图形"><svg width="12" height="12"><path d="M1 9h10" stroke="#2b2b2b" stroke-width="2" /></svg></button>
          <button class="bare" aria-label="还原图形"><svg width="12" height="12"><path d="M4 4V1h7v5H8" fill="none" stroke="#2b2b2b" stroke-width="1.500" /><rect x="1" y="5" width="7" height="5" fill="none" stroke="#2b2b2b" stroke-width="1.500" /></svg></button>
          <button class="bare" aria-label="关闭图形"><svg width="10" height="12"><path d="M1 2l8 8M9 2L1 10" stroke="#2b2b2b" stroke-width="2.400" /></svg></button>
        </div>
      </nav>
    </header>

    <nav class="tabs">
      <button v-for="t in tabs" :key="t" class="bare" :class="{ on: t === activeTab }" @click="activeTab = t">{{ t }}</button>
      <button class="bare mini" aria-label="最小化功能区"><span class="pill"></span><i class="down"></i></button>
    </nav>

    <section class="ribbon">
      <div class="panel w210">
        <div class="body">
          <button v-for="t in drawBig" :key="t.name" class="big" :class="t.icon">
            <svg :width="icons[t.icon].w" height="32" v-html="icons[t.icon].body"></svg><span>{{ t.label }}</span><i v-if="t.arrow" class="down"></i>
          </button>
          <div class="col drawcol">
            <button v-for="t in drawSmall" :key="t.name" class="small" :aria-label="t.name"><svg width="18" height="18" v-html="icons[t.icon].body"></svg><i class="down"></i></button>
          </div>
        </div>
        <div class="foot">绘图<i class="down wide"></i></div>
      </div>

      <div class="panel w226">
        <div class="body">
          <div class="modgrid">
            <button v-for="t in modify" :key="t.name" class="small" :aria-label="t.name">
              <svg width="18" height="18" v-html="icons[t.icon].body"></svg><span v-if="t.label">{{ t.label }}</span><i v-if="t.arrow" class="down far"></i>
            </button>
          </div>
        </div>
        <div class="foot">修改<i class="down wide"></i></div>
      </div>

      <div class="panel w156">
        <div class="body">
          <button class="big"><b class="letter">A</b><span>文字</span><i class="down"></i></button>
          <button class="big"><svg width="30" height="32" v-html="icons.dim.body"></svg><span>标注</span></button>
          <div class="col">
            <button v-for="t in annotate" :key="t.name" class="small"><svg width="18" height="18" v-html="icons[t.icon].body"></svg><span>{{ t.label }}</span><i v-if="t.arrow" class="down"></i></button>
          </div>
        </div>
        <div class="foot">注释<i class="down wide"></i></div>
      </div>

      <div class="panel w252">
        <div class="body">
          <button class="big narrow"><svg width="32" height="32" v-html="icons.layers.body"></svg><span>图层<br>特性</span></button>
          <div class="col grow">
            <div class="combo">
              <svg width="12" height="16" v-html="icons.bulb.body"></svg>
              <svg width="16" height="16" v-html="icons.sun.body"></svg>
              <svg width="16" height="16" v-html="icons.lock.body"></svg>
              <i class="swatch"></i>
              <select aria-label="图层"><option>0</option></select><i class="down wide"></i>
            </div>
            <div class="laygrid">
              <button v-for="t in layerTools" :key="t.name" class="small" :aria-label="t.name"><svg width="18" height="18" v-html="icons[t.icon].body"></svg><span v-if="t.label">{{ t.label }}</span></button>
            </div>
          </div>
        </div>
        <div class="foot">图层<i class="down wide"></i></div>
      </div>

      <div class="panel w133">
        <div class="body">
          <button class="big"><svg width="32" height="32" v-html="icons.insert.body"></svg><span>插入</span></button>
          <div class="col">
            <button v-for="t in block" :key="t.name" class="small"><svg width="18" height="16" v-html="icons[t.icon].body"></svg><span>{{ t.label }}</span><i v-if="t.arrow" class="down"></i></button>
          </div>
        </div>
        <div class="foot">块<i class="down wide"></i></div>
      </div>

      <div class="panel w243">
        <div class="body">
          <button class="big narrow"><svg width="32" height="32" v-html="icons.match.body"></svg><span>特性<br>匹配</span></button>
          <div class="col grow">
            <div class="prop"><svg width="16" height="16" v-html="icons.wheel.body"></svg>
              <div class="combo color"><i class="swatch"></i><select aria-label="对象颜色"><option>ByLayer</option></select><i class="down wide"></i></div></div>
            <div class="prop"><svg width="16" height="16" v-html="icons.weight.body"></svg>
              <div class="combo"><i class="rule"></i><select aria-label="线宽"><option>ByLayer</option></select><i class="down wide"></i></div></div>
            <div class="prop"><svg width="16" height="16" v-html="icons.ltype.body"></svg>
              <div class="combo"><i class="rule"></i><select aria-label="线型"><option>ByLayer</option></select><i class="down wide"></i></div></div>
          </div>
        </div>
        <div class="foot propfoot">特性<i class="down wide"></i><svg class="launch" width="8" height="8"><path d="M1 1l5 5M6 2v4H2" fill="none" stroke="#eee" /></svg></div>
      </div>

      <div class="panel w67">
        <div class="body">
          <button class="big narrow"><svg width="34" height="34" v-html="icons.group.body"></svg><span>组</span></button>
          <div class="col icons">
            <button v-for="t in groupTools" :key="t.name" class="small sole" :class="{ active: t.active }" :aria-label="t.name"><svg width="18" height="18" v-html="icons[t.icon].body"></svg></button>
          </div>
        </div>
        <div class="foot">组<i class="down wide"></i></div>
      </div>

      <div class="panel w76">
        <div class="body">
          <button class="big util"><svg width="32" height="32" v-html="icons.measure.body"></svg><span>测量</span><i class="down"></i></button>
          <div class="col icons">
            <button v-for="t in utilTools" :key="t.name" class="small sole" :aria-label="t.name"><svg width="18" height="18" v-html="icons[t.icon].body"></svg></button>
          </div>
        </div>
        <div class="foot">实用工具<i class="down wide"></i></div>
      </div>

      <div class="panel w75">
        <div class="body">
          <button class="big util"><svg width="32" height="32" v-html="icons.paste.body"></svg><span>粘贴</span><i class="down"></i></button>
          <div class="col icons">
            <button v-for="t in clipTools" :key="t.name" class="small sole" :aria-label="t.name"><svg width="18" height="18" v-html="icons[t.icon].body"></svg></button>
          </div>
        </div>
        <div class="foot">剪贴板</div>
      </div>
    </section>

    <div class="doctabs">
      <div class="doctab">
        <svg class="shape" width="145" height="24" viewBox="0 0 145 24"><path d="M0 24c6 0 6-8 9-16Q11 1 18 1H121Q127 1 129 6C133 16 134 24 143 24z" fill="url(#tab)" /></svg>
        <span>Drawing1*</span>
        <button class="bare" aria-label="关闭 Drawing1"><svg width="10" height="10"><path d="M2 2l6 6M8 2L2 8" stroke="#4a4a4a" stroke-width="1.600" /></svg></button>
      </div>
      <button class="bare addtab" aria-label="新图形">+</button>
    </div>

    <main class="work">
      <svg class="canvas" viewBox="0 194 1912 856" preserveAspectRatio="xMidYMid slice">
        <g shape-rendering="crispEdges">
          <path v-for="g in gridX" :key="'x' + g.at" :d="`M${g.at} 194V1050`" :stroke="g.major ? '#30384a' : '#262d38'" />
          <path v-for="g in gridY" :key="'y' + g.at" :d="`M0 ${g.at}H1912`" :stroke="g.major ? '#30384a' : '#262d38'" />
        </g>
        <rect x="475.500" y="248.500" width="376" height="421" fill="#12931a" fill-opacity=".2" />
        <g fill="none">
          <g stroke="#fff">
            <g stroke-width="5" opacity=".22"><path :d="pickedPath" /><circle cx="830" cy="710.500" r="88" /><circle cx="830" cy="710.500" r="59.500" /></g>
            <g stroke-width="3" opacity=".4"><path :d="pickedPath" /><circle cx="830" cy="710.500" r="88" /><circle cx="830" cy="710.500" r="59.500" /></g>
            <g stroke-width="1.400"><path :d="pickedPath" /><circle cx="830" cy="710.500" r="88" /><circle cx="830" cy="710.500" r="59.500" /></g>
          </g>
          <g stroke="#dcdcdc" stroke-width="1.200">
            <path :d="plainPath" />
            <circle cx="830" cy="710.500" r="29" /><circle cx="830" cy="710.500" r="7" />
            <circle cx="1113.500" cy="710.500" r="88" /><circle cx="1113.500" cy="710.500" r="59.500" /><circle cx="1113.500" cy="710.500" r="29" /><circle cx="1113.500" cy="710.500" r="7" />
          </g>
        </g>
        <rect x="476" y="249" width="375" height="420" fill="#1fb04a" fill-opacity=".28" />
        <rect x="475.500" y="248.500" width="376" height="421" fill="none" stroke="#fff" stroke-dasharray="4 2" />
        <path d="M851.500 618V718M803 669.500H900" stroke="#fff" />
        <rect x="862.500" y="647.500" width="10" height="10" fill="#1c2126" stroke="#000" stroke-width="3" />
        <rect x="862.500" y="647.500" width="10" height="10" fill="none" stroke="#fff" stroke-dasharray="2 1" />
        <circle cx="862.500" cy="652.500" r="3" fill="#1fc41f" />
        <rect x="367.500" y="180.500" width="1153" height="776" rx="1" fill="none" stroke="#fe1b10" stroke-width="3" />
        <g stroke="#f2f2f2" stroke-width="1.400" fill="none">
          <path d="M21.500 1028.500V978M21.500 1028.500H72" /><rect x="17" y="1024" width="9" height="9" />
          <path d="M23 961l6 6 7-6M29.500 967v7M76 1014l13 13M89 1014l-13 13" />
        </g>
      </svg>
      <span class="viewlabel">[−][俯视][二维线框]</span>
      <div class="tip">指定对角点:</div>

      <div class="cube">
        <i class="ring"></i>
        <button class="face">上</button>
        <span class="n">北</span><span class="s">南</span><span class="w">西</span><span class="e">东</span>
      </div>
      <button class="wcs">WCS<svg width="10" height="6"><path d="M1 1h8L5 5z" fill="none" stroke="#c8cad4" /></svg></button>
      <div class="navbar">
        <svg width="32" height="212" fill="none" stroke="#3f454a" stroke-width="1.300">
          <circle cx="26" cy="5" r="3" fill="#4a4f53" /><path d="M24 3l4 4M28 3l-4 4" stroke="#777" stroke-width=".8" />
          <path d="M5 30a11 11 0 0 1 11-11h10v11a10 10 0 0 1-21 0z" /><circle cx="16" cy="30" r="6" /><path d="M8 37l4-3M24 37l-4-3" />
          <path d="M14 49h6l-3 3zM14 119h6l-3 3zM14 157h6l-3 3z" fill="#3f454a" stroke="none" />
          <path d="M3 56h26M3 164h26" stroke="#777c80" />
          <path d="M10 82l-5-7q2-3 6 1l-3-11q3-1 5 6l0-8q3-2 4 7l2-7q3-1 2 8l3-4q3 1 1 7l-2 7q-7 6-13 1z" fill="#51585d" />
          <path d="M5 90l15 15M20 90L5 105M5 94v-4h4M16 90h4v4M5 101v4h4" /><circle cx="21" cy="103" r="5" fill="#5b6063" /><path d="M24 107l4 4" stroke-width="3" />
          <path d="M14 148v-14h-3l5-6 5 6h-3v14z" /><path d="M21 135q6 1 6 4c0 6-22 6-22 0q0-3 6-4M12 140l-5 3 5 3z" />
          <rect x="5" y="169" width="6" height="6" /><rect x="13" y="169" width="6" height="6" /><rect x="21" y="169" width="6" height="6" />
          <rect x="5" y="178" width="16" height="13" /><path d="M10 181l6 4-6 4z" fill="#3f454a" /><circle cx="26" cy="205" r="3" /><path d="M24 205h4" />
        </svg>
      </div>

      <div class="cmd">
        <p v-for="h in history" :key="h" class="hist"><span v-for="(p, i) in split(h)" :key="i" :class="p.cjk ? 'cjk' : 'mono'">{{ p.t }}</span></p>
        <div class="cmdline">
          <div class="grip"><i class="dots"></i>
            <button class="bare" aria-label="关闭命令行"><svg width="12" height="12"><path d="M2 2l8 8M10 2l-8 8" stroke="#f2f2f2" stroke-width="2.200" /></svg></button>
            <button class="bare" aria-label="自定义"><svg width="16" height="16" v-html="icons.wrench.body"></svg></button>
          </div>
          <svg class="pico" width="18" height="18" v-html="icons.prompt.body"></svg><i class="down gray"></i>
          <label for="cmd"><b class="mono">SELECT </b><span v-for="(p, i) in split(promptText)" :key="i" :class="p.cjk ? 'cjk' : 'mono'">{{ p.t }}</span></label>
          <input id="cmd" v-model="command" type="text">
          <button class="bare" aria-label="命令历史"><i class="up"></i></button>
        </div>
      </div>

      <div class="edge"></div>
      <div class="meter"><i></i></div>
    </main>

    <footer class="status">
      <div class="layouts">
        <button class="on">模型</button><button>布局1</button><button>布局2</button><button class="plus" aria-label="新建布局">+</button>
      </div>
      <div class="cells">
        <div class="cell coords">332.0662, 324.3908, 0.0000</div>
        <button class="cell model">模型</button>
        <div class="cell g1"><svg class="glow" width="18" height="18" v-html="icons.sgrid.body"></svg><svg width="16" height="16" v-html="icons.ssnap.body"></svg><i class="down wide"></i></div>
        <div class="cell g2"><svg width="16" height="16" v-html="icons.sortho.body"></svg><svg class="glow" width="18" height="18" v-html="icons.spolar.body"></svg><i class="down wide"></i><svg width="18" height="20" v-html="icons.siso.body"></svg><i class="down wide"></i></div>
        <div class="cell g3"><svg class="glow" width="18" height="18" v-html="icons.strack.body"></svg><svg class="glow" width="18" height="18" v-html="icons.sosnap.body"></svg><i class="down wide"></i></div>
        <div class="cell g4"><svg class="glow" width="18" height="18" v-html="icons.sann1.body"></svg><svg width="18" height="18" v-html="icons.sann2.body"></svg><svg width="18" height="18" v-html="icons.sann3.body"></svg><span class="ratio">1:1<i class="down wide"></i></span></div>
        <div class="cell g5"><svg width="16" height="16" v-html="icons.sgear.body"></svg><i class="down wide"></i></div>
        <div class="cell g6"><svg width="16" height="16" v-html="icons.splus.body"></svg></div>
        <div class="cell g6"><svg width="18" height="18" v-html="icons.siso2.body"></svg></div>
        <div class="cell g6"><svg class="glow" width="18" height="18" v-html="icons.shw.body"></svg></div>
        <div class="cell g7"><svg width="18" height="16" v-html="icons.sfull.body"></svg><svg width="16" height="16" v-html="icons.smenu.body"></svg></div>
      </div>
      <div class="mark">最需教育</div>
    </footer>
  </div>
</template>

<style>
html, body { margin: 0; background: #373737; }
</style>

<style scoped>
* { box-sizing: border-box; }
.app {
  display: flex; flex-direction: column; min-height: 100vh; overflow: hidden;
  font: 12px/16px "Noto Sans", "Noto Sans CJK SC", sans-serif; color: #f2f2f2; background: #373737;
}
.defs { position: absolute; }
button, select, input { font: inherit; color: inherit; margin: 0; padding: 0; border: 0; background: none; }
svg { display: block; flex: none; }
.bare { display: flex; align-items: center; }
i { font-style: normal; flex: none; }
.down { width: 0; height: 0; border: 3px solid transparent; border-top-color: #f2f2f2; border-bottom: 0; }
.down.wide { border-width: 4px 4px 0; }
.down.dark { border-top-color: #333; border-width: 4px 4px 0; }
.down.faint { border-top-color: #aaa; }
.down.gray { border-top-color: #999; }
.up { width: 0; height: 0; border: 4px solid transparent; border-bottom-color: #111; border-top: 0; }

.top { display: grid; grid-template-columns: 41px 1fr; grid-template-rows: 24px 22px; }
.appbtn {
  grid-row: 1 / 3; height: 41px; display: flex; align-items: center; justify-content: center; gap: 2px; position: relative; z-index: 1;
  background: linear-gradient(#a9a9a9, #5d5d5d); border: 1px solid #161616; box-shadow: inset 0 0 0 1px #8a8a8a; padding-bottom: 8px;
}
.appbtn .down { align-self: flex-end; margin-bottom: 8px; }
.titlebar { display: flex; background: #dcfafb; border-bottom: 1px solid #2a2a2a; }
.quick { display: flex; align-items: center; gap: 7px; width: 197px; padding-left: 8px; background: linear-gradient(#8c8c8c, #6e6e6e); }
.combo {
  display: flex; align-items: center; flex: 1; height: 23px; padding: 0 2px 0 4px; color: #f2f2f2;
  background: linear-gradient(#606060, #4c4c4c); border: 1px solid #333;
}
.combo select { appearance: none; flex: 1; min-width: 0; outline: 0; }
.combo select option { color: #222; }
.space { flex: none; width: 180px; gap: 2px; background: linear-gradient(#5a5a5a, #484848); }
.space select { color: #8a8a8a; }
.more { flex-direction: column; justify-content: center; gap: 3px; width: 17px; background: linear-gradient(#9a9a9a, #6e6e6e); }
.dash { width: 8px; height: 2px; background: #f2f2f2; }
.glass {
  flex: 1; position: relative; display: flex; justify-content: flex-end; overflow: hidden;
  background: linear-gradient(90deg, #e0fdff 0, #dffcfe 20%, #fff 28%, #fff 36%, #daf4f4 39%, #e1feff 46%, #ddf9fa 52%, #e1feff 60%, #dbf6f7 68%, #e2feff 78%, #e1feff 100%);
}
.glass h1 { position: absolute; left: 602px; top: 3px; margin: 0; font-size: 13px; line-height: 18px; font-weight: 400; color: #1a1a1a; white-space: nowrap; }
.smudge { position: absolute; top: 13px; height: 9px; width: 34px; background: #6d92d8; opacity: .55; filter: blur(3px); }
.s1 { left: 4px; width: 22px; } .s2 { left: 40px; width: 44px; } .s3 { left: 146px; width: 70px; } .s4 { left: 232px; width: 80px; }
.s5 { left: 380px; width: 60px; } .s6 { left: 442px; width: 50px; } .s7 { left: 595px; width: 12px; } .s8 { left: 1296px; width: 12px; } .s9 { left: 1336px; width: 14px; }
.winctl { display: flex; width: 103px; height: 17px; margin-right: 3px; border: 1px solid #8e9da0; border-top: 0; border-radius: 0 0 4px 4px; z-index: 1; }
.winctl button { width: 28px; display: flex; align-items: center; justify-content: center; padding-bottom: 3px; border-right: 1px solid #8e9da0; }
.winctl .close { flex: 1; border: 0; }
.menubar { display: flex; align-items: center; gap: 25px; padding-left: 14px; background: linear-gradient(#a3a3a3, #565656); border-bottom: 1px solid #2c2c2c; }
.docctl { margin-left: auto; display: flex; gap: 5px; padding-right: 5px; }

.tabs { display: flex; height: 21px; padding: 1px 0 0 4px; background: #525252; border-bottom: 1px solid #333; color: #dcdcdc; }
.tabs .bare { padding: 0 10px; }
.tabs .on { margin: 1px 1px -1px 0; padding: 0 8px 2px; background: linear-gradient(#717171, #5b5b5b); border: 1px solid #333; border-bottom: 0; color: #fff; }
.tabs .mini { margin-left: 12px; gap: 5px; }
.pill { width: 14px; height: 9px; border-radius: 2px; background: #ececec; position: relative; }
.pill::after { content: ""; position: absolute; left: 4px; top: 3px; border: 3px solid transparent; border-bottom-color: #333; border-top: 0; }

.ribbon { display: flex; height: 98px; gap: 2px; padding: 0 0 1px 2px; background: linear-gradient(#505050, #383838); border-bottom: 1px solid #8b8b8b; }
.panel { display: flex; flex-direction: column; flex: none; background: #5b5b5b; border-right: 1px solid #6b6b6b; }
.w210 { width: 209px; } .w226 { width: 224px; } .w156 { width: 154px; } .w252 { width: 251px; } .w133 { width: 131px; }
.w243 { width: 241px; } .w67 { width: 66px; } .w76 { width: 74px; } .w75 { width: 74px; }
.w156 .body { padding-left: 5px; }
.body { display: flex; height: 79px; }
.foot { position: relative; flex: 1; display: flex; align-items: center; justify-content: center; gap: 7px; margin-left: 1px; background: linear-gradient(#4f4f4f, #484848); }
.foot .down.wide { border-width: 5px 4px 0; }
.propfoot { padding-right: 10px; }
.launch { position: absolute; right: 2px; bottom: 4px; }
.big { width: 42px; height: 76px; padding-top: 6px; display: flex; flex-direction: column; align-items: center; flex: none; line-height: 17px; white-space: nowrap; }
.big svg { height: 32px; }
.big span { margin-top: 4px; }
.big .down { margin-top: 2px; }
.big.pline { width: 38px; }
.big.narrow { width: 41px; }
.util { width: 48px; }
.letter { height: 32px; font: 400 36px/30px "Liberation Sans", sans-serif; color: #e2e2e2; }
.col { display: flex; flex-direction: column; padding-top: 4px; }
.grow { flex: 1; }
.small { display: flex; align-items: center; height: 24px; gap: 4px; white-space: nowrap; }
.small .down { margin-left: 5px; }
.drawcol { margin-left: 6px; }
.small .far { margin-left: 8px; }
.modgrid { display: grid; grid-template-columns: 59px 59px 75px 22px; grid-auto-rows: 24px; padding: 4px 0 0 5px; }
.grow > .combo { flex: none; gap: 4px; }
.grow > .combo select { margin-left: 3px; }
.swatch { width: 14px; height: 14px; background: #fff; border: 1px solid #111; }
.laygrid { display: grid; grid-template-columns: repeat(4, 24px) auto; grid-auto-rows: 24px; padding: 1px 0 0 3px; }
.w252 .small { gap: 3px; }
.prop { display: flex; align-items: center; gap: 2px; height: 24px; }
.prop .combo { gap: 3px; padding: 0 1px 0 8px; }
.prop .color { padding-left: 12px; gap: 9px; }
.color .swatch { width: 16px; height: 16px; border-color: #999; }
.rule { width: 59px; height: 1px; background: #f2f2f2; }
.sole { width: 24px; justify-content: center; }
.sole.active { background: linear-gradient(#6b8ec4, #4f6a98); border: 1px solid #2c3c5a; }

.doctabs { display: flex; height: 29px; align-items: flex-end; padding-left: 15px; background: #373737; border-bottom: 4px solid #5c5c5c; }
.doctab { position: relative; display: flex; align-items: center; width: 137px; height: 24px; padding: 0 18px 0 17px; font-size: 13px; }
.doctab .shape { position: absolute; left: 0; top: 0; }
.doctab span { position: relative; flex: 1; }
.doctab button { position: relative; }
.addtab { justify-content: center; width: 22px; height: 15px; margin-bottom: 3px; border-radius: 2px 10px 2px 8px; background: #575757; font-size: 16px; font-weight: 700; color: #c8c8c8; }

.work { position: relative; flex: 1; min-height: 600px; background: #21272f; }
.canvas { position: absolute; left: 0; top: 0; width: calc(100% - 8px); height: 100%; overflow: visible; }
.viewlabel { position: absolute; left: 3px; top: 6px; color: #fff; }
.tip { position: absolute; left: 867px; top: 492px; width: 81px; height: 25px; padding: 2px 3px; background: #999; border: 1px solid #000; color: #111; }
.cube { position: absolute; right: 24px; top: 15px; width: 134px; height: 134px; font: 500 18px/20px "Noto Sans CJK SC", sans-serif; color: #a9abad; }
.ring { position: absolute; inset: 7px; border: 13px solid #454a51; border-radius: 50%; }
.face { position: absolute; left: 41px; top: 41px; width: 52px; height: 52px; background: #b3b4b5; border: 1px solid #7c7f80; font: 30px/30px "Noto Sans CJK SC", sans-serif; color: #5b6267; box-shadow: inset 0 0 0 10px #b3b4b5, inset 0 0 0 30px #a1a6aa; }
.cube span { position: absolute; }
.n { left: 58px; top: 1px; } .s { left: 58px; bottom: -1px; } .w { left: 1px; top: 58px; } .e { right: 2px; top: 58px; }
.wcs { position: absolute; right: 67px; top: 169px; width: 48px; height: 18px; display: flex; align-items: center; justify-content: space-between; padding: 0 4px; border-radius: 4px; background: #9497a5; color: #555a68; font: 10px/12px "Liberation Sans", sans-serif; }
.navbar { position: absolute; right: 12px; top: 212px; border-radius: 4px; background: #5b6063; box-shadow: 0 0 0 1px #1a1e23; }
.cmd { position: absolute; left: 389px; right: 388px; bottom: 0; display: flex; flex-direction: column; align-items: flex-start; }
.cjk { font: 13px/16px "Noto Sans CJK SC", sans-serif; }
.mono { font-family: "DejaVu Sans Mono", monospace; font-size: 11px; line-height: 16px; white-space: pre; }
.hist { display: flex; height: 15px; margin: 0 0 1px 57px; padding: 0 2px; border-radius: 2px; background: #555; color: #d8d8d8; line-height: 15px; align-items: center; }
.hist:first-child { background: #4a4a4c; color: #a8a8a8; }
.hist:nth-child(3) { background: #5c5c5c; color: #f2f2f2; }
.cmdline { display: flex; align-items: center; align-self: stretch; height: 27px; background: #fff; border: 1px solid #777; color: #000; }
.grip { display: flex; align-items: center; gap: 8px; flex: none; width: 53px; height: 25px; padding-left: 3px; background: linear-gradient(#707070, #4a4a4a); }
.dots { width: 5px; height: 17px; margin-right: -3px; background: radial-gradient(circle at 1px 1px, #c0c0c0 1px, transparent 1px) 0 0 / 3px 3px; }
.pico { margin: 0 0 4px 4px; }
.cmdline label { display: flex; margin-left: 8px; padding-bottom: 2px; }
.cmdline input { flex: 1; min-width: 0; outline: 0; padding-left: 4px; }
.cmdline > .bare { width: 14px; }
.edge { position: absolute; right: 0; top: 0; bottom: 0; width: 8px; background: #b8d0ea; border-right: 1px solid #000; box-shadow: inset -1px 0 #12c4f0; }
.meter { position: absolute; right: 2px; top: 51px; width: 9px; height: 59px; border-radius: 3px; background: #3f4b55; border: 1px solid #aab; padding: 32px 1px 1px; }
.meter i { display: block; height: 100%; background: repeating-linear-gradient(#4ad07a 0 1px, #24663c 1px 2px); }

.status { position: relative; display: flex; justify-content: space-between; height: 30px; background: #373737; border-top: 1px solid #5b5b5b; border-bottom: 2px solid #15171a; }
.layouts { display: flex; height: 18px; padding-left: 8px; color: #b0b0b0; }
.layouts button { width: 54px; margin-right: -1px; line-height: 15px; padding-bottom: 2px; background: linear-gradient(#4a4a4a, #686868); clip-path: polygon(0 0, 100% 0, 96% 40%, 86% 100%, 14% 100%, 4% 40%); }
.layouts .on { width: 52px; font-weight: 700; color: #fff; background: linear-gradient(#4a4a4a, #8d8d8d); }
.layouts .plus { width: 24px; height: 16px; margin-left: 3px; font-size: 16px; font-weight: 700; clip-path: polygon(16% 0, 100% 0, 90% 60%, 70% 100%, 0 100%); color: #c8c8c8; }
.cells { display: flex; gap: 1px; padding-right: 1px; }
.cell { display: flex; align-items: center; justify-content: space-between; height: 26px; border: 1px solid #808080; background: #4d4d4d; }
.coords { width: 183px; padding-left: 21px; font-size: 12px; white-space: nowrap; }
.model { width: 29px; justify-content: center; font-weight: 700; }
.g1 { width: 65px; padding: 0 4px; }
.g2 { width: 101px; padding: 0 4px; }
.g3 { width: 64px; padding: 0 4px; }
.g4 { width: 111px; padding: 0 3px 0 4px; }
.ratio { display: flex; align-items: center; gap: 4px; }
.g5 { width: 40px; padding: 0 4px; }
.g6 { width: 26px; justify-content: center; }
.g7 { width: 50px; padding: 0 4px; }
.glow { filter: drop-shadow(0 0 2px #0a4da8); }
.mark { position: absolute; right: 7px; bottom: 22px; height: 36px; font: 900 36px/36px "Noto Sans CJK SC", sans-serif; color: #858585; white-space: nowrap; }
</style>
